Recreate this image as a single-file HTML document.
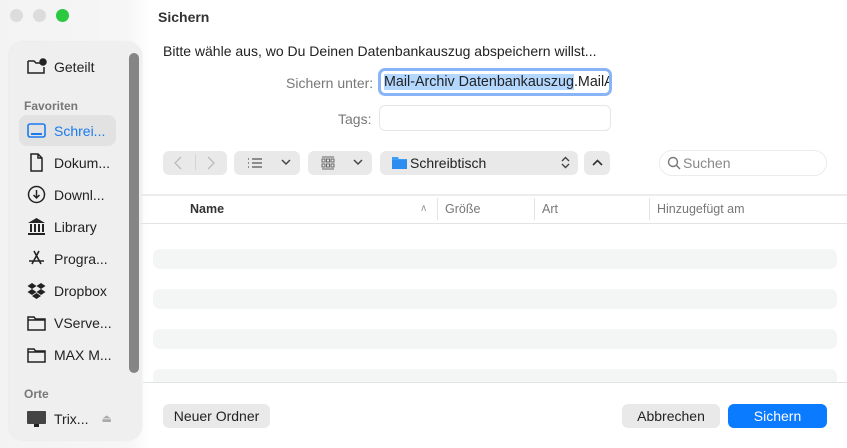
<!DOCTYPE html>
<html><head><meta charset="utf-8"><style>
*{margin:0;padding:0;box-sizing:border-box}
body{width:847px;height:448px;overflow:hidden;background:#fff;font-family:"Liberation Sans",sans-serif;position:relative;color:#222}
.a{position:absolute}
.left{left:0;top:0;width:150px;height:448px;background:linear-gradient(90deg,#f3f3f3,#f6f6f6 85%,#fff)}
.dot{width:13px;height:13px;border-radius:50%;top:9px;background:#dcdcdc}
.side{left:9px;top:42px;width:133px;height:398px;border-radius:14px;background:#efefef;box-shadow:0 0 2px rgba(0,0,0,.08)}
.it{left:26px;font-size:14px;color:#222;display:flex;align-items:center;gap:7px}
.it svg{width:21px;height:21px;flex:none}
.hd{left:24px;font-size:12px;color:#777;font-weight:bold}
.btn{background:#e9e9e9;border-radius:6px}
.rowb{left:153px;width:684px;height:20px;border-radius:7px;background:#f4f5f5}
.sep{background:#e3e3e3;height:1px}
.col{font-size:12.5px;color:#777;top:202px}
.pb{border-radius:6px;font-size:14px;display:flex;align-items:center;justify-content:center}
</style></head><body>
<div class="a left"></div>
<div class="a dot" style="left:10px"></div>
<div class="a dot" style="left:33px"></div>
<div class="a dot" style="left:56px;background:#2bc840"></div>
<div class="a side"></div>
<div class="a" style="left:129px;top:53px;width:10px;height:320px;border-radius:5px;background:#858585"></div>
<div class="a" style="left:19px;top:115px;width:97px;height:31px;border-radius:8px;background:#e2e2e2"></div>

<div class="a it" style="top:56px"><svg viewBox="0 0 21 21" fill="none" stroke="#222" stroke-width="1.5"><path d="M2 5h6l2 2h5M2 5v12h16v-6"/><circle cx="17" cy="6" r="3" fill="#222"/></svg>Geteilt</div>
<div class="a hd" style="top:99px">Favoriten</div>
<div class="a it" style="top:120px;color:#1a7bf0"><svg viewBox="0 0 21 21" fill="none" stroke="#1a7bf0" stroke-width="1.6"><rect x="2" y="4" width="17" height="13" rx="2"/><path d="M5 14h11" stroke-width="2"/></svg>Schrei...</div>
<div class="a it" style="top:152px"><svg viewBox="0 0 21 21" fill="none" stroke="#222" stroke-width="1.5"><path d="M5 2h7l4 4v13H5zM12 2v4h4"/></svg>Dokum...</div>
<div class="a it" style="top:184px"><svg viewBox="0 0 21 21" fill="none" stroke="#222" stroke-width="1.5"><circle cx="10.5" cy="10.5" r="8"/><path d="M10.5 6v8M7.5 11l3 3 3-3"/></svg>Downl...</div>
<div class="a it" style="top:216px"><svg viewBox="0 0 21 21" fill="#222"><path d="M10.5 2L2 7h17z"/><rect x="4" y="8" width="2" height="8"/><rect x="8" y="8" width="2" height="8"/><rect x="12" y="8" width="2" height="8"/><rect x="16" y="8" width="2" height="8"/><rect x="2" y="17" width="17" height="2"/></svg>Library</div>
<div class="a it" style="top:248px"><svg viewBox="0 0 21 21" fill="none" stroke="#222" stroke-width="1.6"><path d="M8 3l7 13M13 3L6 16M3 13h15"/></svg>Progra...</div>
<div class="a it" style="top:280px"><svg viewBox="0 0 21 21" fill="#222"><path d="M6 3l4.5 3L6 9 1.5 6zM15 3l4.5 3L15 9l-4.5-3zM6 9l4.5 3L6 15l-4.5-3zM15 9l4.5 3-4.5 3-4.5-3zM6 16l4.5-3 4.5 3-4.5 3z"/></svg>Dropbox</div>
<div class="a it" style="top:312px"><svg viewBox="0 0 21 21" fill="none" stroke="#222" stroke-width="1.5"><path d="M2 5h6l1.5 2H19v11H2zM2 8h17"/></svg>VServe...</div>
<div class="a it" style="top:344px"><svg viewBox="0 0 21 21" fill="none" stroke="#222" stroke-width="1.5"><path d="M2 5h6l1.5 2H19v11H2zM2 8h17"/></svg>MAX M...</div>
<div class="a hd" style="top:387px">Orte</div>
<div class="a it" style="top:408px"><svg viewBox="0 0 21 21"><rect x="1" y="3" width="19" height="13" rx="1" fill="#444"/><rect x="8" y="16" width="5" height="3" fill="#222"/></svg>Trix...<span style="color:#aaa;font-size:11px;margin-left:6px">⏏</span></div>

<div class="a" style="left:158px;top:9px;font-size:14px;font-weight:bold;color:#333">Sichern</div>
<div class="a" style="left:163px;top:43px;font-size:14px;color:#222">Bitte wähle aus, wo Du Deinen Datenbankauszug abspeichern willst...</div>
<div class="a" style="left:286px;top:75px;font-size:14px;color:#777">Sichern unter:</div>
<div class="a" style="left:378px;top:68px;width:234px;height:28px;border:3px solid #8ab4f8;border-radius:7px;overflow:hidden;white-space:nowrap;font-size:14.3px;padding:3px 0 0 3px;background:#fff"><span style="background:#b3d7ff">Mail-Archiv Datenbankauszug</span>.MailAr</div>
<div class="a" style="left:338px;top:111px;font-size:14px;color:#777">Tags:</div>
<div class="a" style="left:379px;top:105px;width:232px;height:26px;border:1px solid #e6e6e6;border-radius:6px"></div>

<div class="a btn" style="left:163px;top:151px;width:64px;height:24px"></div>
<svg class="a" style="left:174px;top:156px" width="8" height="14" fill="none" stroke="#bbb" stroke-width="1.3"><path d="M7 1L1 7l6 6"/></svg>
<div class="a" style="left:195px;top:154px;width:1px;height:16px;background:#d5d5d5"></div>
<svg class="a" style="left:207px;top:156px" width="8" height="14" fill="none" stroke="#bbb" stroke-width="1.3"><path d="M1 1l6 6-6 6"/></svg>
<div class="a btn" style="left:234px;top:151px;width:66px;height:24px"></div>
<svg class="a" style="left:247px;top:157px" width="16" height="12" stroke="#555" stroke-width="1.2"><path d="M1 2h1M1 6h1M1 10h1M5 2h10M5 6h10M5 10h10"/></svg>
<svg class="a" style="left:281px;top:159px" width="10" height="7" fill="none" stroke="#444" stroke-width="1.5"><path d="M1 1l4 4 4-4"/></svg>
<div class="a btn" style="left:308px;top:151px;width:64px;height:24px"></div>
<svg class="a" style="left:321px;top:156px" width="14" height="14" fill="none" stroke="#666" stroke-width="1"><rect x="1" y="3" width="3" height="3"/><rect x="5.5" y="3" width="3" height="3"/><rect x="10" y="3" width="3" height="3"/><rect x="1" y="8" width="3" height="3"/><rect x="5.5" y="8" width="3" height="3"/><rect x="10" y="8" width="3" height="3"/><path d="M1 1h12M1 13h12"/></svg>
<svg class="a" style="left:353px;top:159px" width="10" height="7" fill="none" stroke="#444" stroke-width="1.5"><path d="M1 1l4 4 4-4"/></svg>
<div class="a btn" style="left:380px;top:151px;width:198px;height:24px"></div>
<svg class="a" style="left:392px;top:156px" width="15" height="13"><path d="M0 1h6l1 2h8v10H0z" fill="#3d9ef5"/><rect x="0" y="4" width="15" height="9" fill="#2d8cf0"/></svg>
<div class="a" style="left:410px;top:155px;font-size:14px;color:#222">Schreibtisch</div>
<svg class="a" style="left:561px;top:156px" width="9" height="13" fill="none" stroke="#444" stroke-width="1.4"><path d="M1 5l3.5-3.5L8 5M1 8l3.5 3.5L8 8"/></svg>
<div class="a btn" style="left:584px;top:151px;width:26px;height:24px"></div>
<svg class="a" style="left:592px;top:159px" width="11" height="7" fill="none" stroke="#333" stroke-width="1.6"><path d="M1 6l4.5-4.5L10 6"/></svg>
<div class="a" style="left:659px;top:150px;width:168px;height:26px;border:1px solid #ececec;border-radius:13px"></div>
<svg class="a" style="left:667px;top:156px" width="14" height="14" fill="none" stroke="#777" stroke-width="1.4"><circle cx="6" cy="6" r="4.5"/><path d="M9.5 9.5l3.5 3.5"/></svg>
<div class="a" style="left:683px;top:155px;font-size:14px;color:#888">Suchen</div>

<div class="a sep" style="left:140px;top:194px;width:707px;height:2px;background:#ececec"></div>
<div class="a" style="left:190px;top:202px;font-size:12.5px;font-weight:bold;color:#333">Name</div>
<div class="a" style="left:420px;top:203px;font-size:10px;color:#999">∧</div>
<div class="a" style="left:437px;top:198px;width:1px;height:22px;background:#e4e4e4"></div>
<div class="a col" style="left:445px">Größe</div>
<div class="a" style="left:534px;top:198px;width:1px;height:22px;background:#e4e4e4"></div>
<div class="a col" style="left:542px">Art</div>
<div class="a" style="left:649px;top:198px;width:1px;height:22px;background:#e4e4e4"></div>
<div class="a col" style="left:657px">Hinzugefügt am</div>
<div class="a sep" style="left:140px;top:223px;width:707px"></div>
<div class="a rowb" style="top:249px"></div>
<div class="a rowb" style="top:289px"></div>
<div class="a rowb" style="top:329px"></div>
<div class="a rowb" style="top:369px;height:13px;border-radius:7px 7px 0 0"></div>
<div class="a sep" style="left:143px;top:382px;width:704px"></div>

<div class="a pb btn" style="left:163px;top:404px;width:107px;height:24px;color:#222">Neuer Ordner</div>
<div class="a pb btn" style="left:622px;top:404px;width:98px;height:24px;color:#222">Abbrechen</div>
<div class="a pb" style="left:728px;top:404px;width:99px;height:24px;background:#0a7aff;color:#fff">Sichern</div>
</body></html>
